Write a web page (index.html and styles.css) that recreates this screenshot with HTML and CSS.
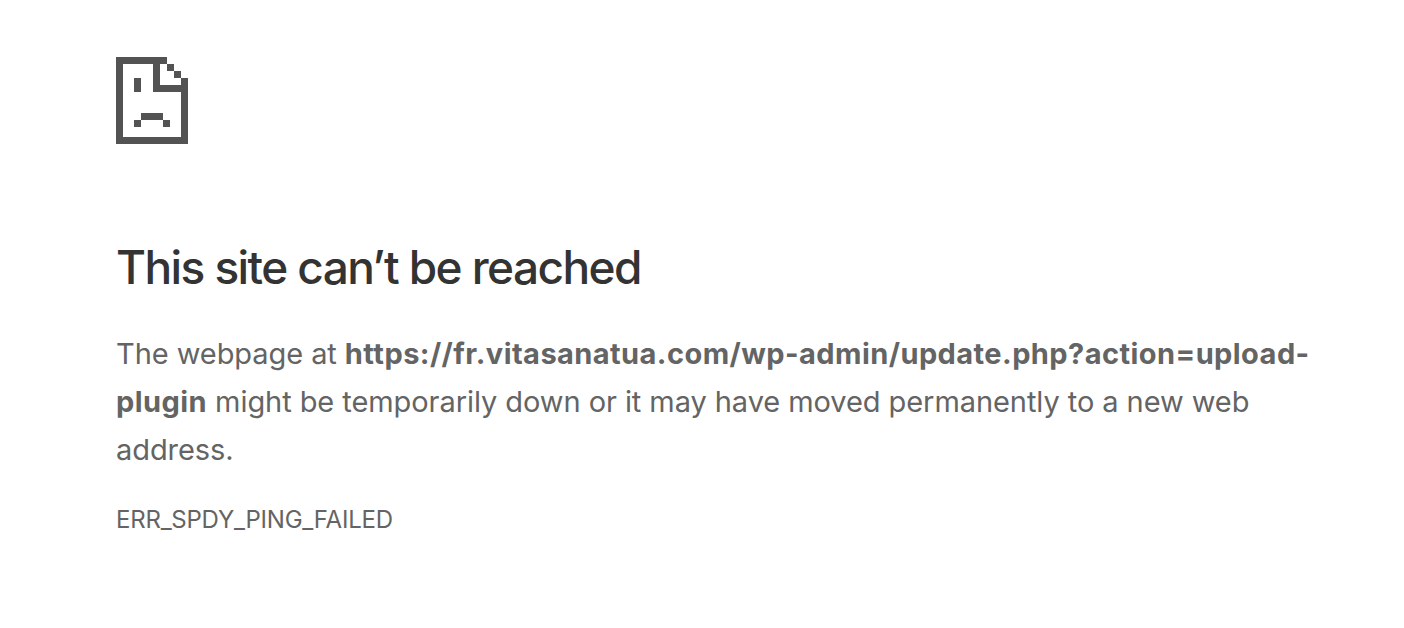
FILE: index.html
```html
<!DOCTYPE html>
<html lang="en">
<head>
    <meta charset="UTF-8">
    <meta name="viewport" content="width=device-width, initial-scale=1.0">
    <title>This site can’t be reached</title>
    <link rel="stylesheet" href="styles.css">
</head>
<body>
    <div class="error-page">
        <svg class="icon" viewBox="0 0 72 87" shape-rendering="crispEdges" aria-hidden="true">
            <path fill-rule="evenodd" d="M0 0H51V7H58V14H65V21H72V87H0ZM7 7V80H65V35H37V7ZM44 7V28H65V21H58V14H51V7Z"/>
            <path d="M18 21h7v14h-7zM25 56h22v7h-22zM18 63h7v7h-7zM47 63h7v7h-7z"/>
        </svg>
        <h1>This site can’t be reached</h1>
        <p class="summary">
            <span class="line">The webpage at <strong>https://fr.vitasanatua.com/wp-admin/update.php?action=upload-</strong></span>
            <span class="line"><strong>plugin</strong> might be temporarily down or it may have moved permanently to a new web</span>
            <span class="line">address.</span>
        </p>
        <div class="error-code">ERR_SPDY_PING_FAILED</div>
    </div>
</body>
</html>
```

FILE: styles.css
```css
body {
    margin: 0;
    background-color: #fff;
    color: #646464;
    font-family: Inter, sans-serif;
}

.error-page {
    padding: 57px 0 0 116px;
}

.icon {
    display: block;
    width: 72px;
    height: 87px;
    fill: #535353;
}

h1 {
    margin: 95px 0 0;
    color: #333;
    font-size: 46px;
    font-weight: 500;
    line-height: 56px;
    letter-spacing: -1.59px;
}

.summary {
    margin: 35px 0 0;
    font-size: 29px;
    line-height: 48px;
    letter-spacing: -0.07px;
}

.summary strong {
    letter-spacing: 0.43px;
}

.line {
    display: block;
    white-space: nowrap;
}

.error-code {
    margin-top: 30px;
    font-size: 24px;
    line-height: 32px;
    letter-spacing: -0.23px;
}
```
